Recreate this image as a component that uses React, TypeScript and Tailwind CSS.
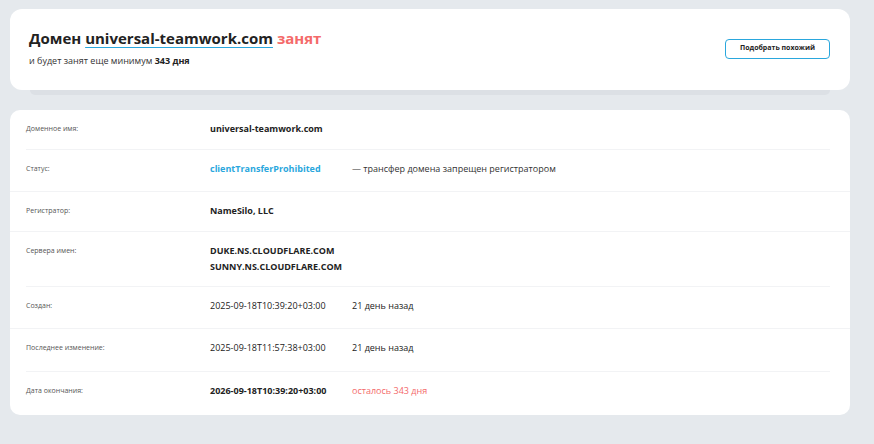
import React from "react";

const rows: {
  label: string;
  value: React.ReactNode;
  extra?: React.ReactNode;
  sep?: "inset" | "full" | "none";
  h: string;
}[] = [
  { label: "Доменное имя:", value: <span className="font-bold text-[#222]">universal-teamwork.com</span>, sep: "inset", h: "h-[39px]" },
  {
    label: "Статус:",
    value: <span className="font-bold text-[#2aa7dd]">clientTransferProhibited</span>,
    extra: <span className="text-[#333]">— трансфер домена запрещен регистратором</span>,
    sep: "full",
    h: "h-[41px]",
  },
  { label: "Регистратор:", value: <span className="font-bold text-[#222]">NameSilo, LLC</span>, sep: "full", h: "h-[39px]" },
  {
    label: "Сервера имен:",
    value: (
      <div className="flex flex-col font-bold text-[#222] leading-[16px]">
        <span>DUKE.NS.CLOUDFLARE.COM</span>
        <span>SUNNY.NS.CLOUDFLARE.COM</span>
      </div>
    ),
    sep: "inset",
    h: "h-[54px]",
  },
  {
    label: "Создан:",
    value: <span className="text-[#222]">2025-09-18T10:39:20+03:00</span>,
    extra: <span className="text-[#222]">21 день назад</span>,
    sep: "full",
    h: "h-[41px]",
  },
  {
    label: "Последнее изменение:",
    value: <span className="text-[#222]">2025-09-18T11:57:38+03:00</span>,
    extra: <span className="text-[#222]">21 день назад</span>,
    sep: "inset",
    h: "h-[42px]",
  },
  {
    label: "Дата окончания:",
    value: <span className="font-bold text-[#222]">2026-09-18T10:39:20+03:00</span>,
    extra: <span className="text-[#f46a6a]">осталось 343 дня</span>,
    sep: "none",
    h: "h-[43px]",
  },
];

export default function App() {
  return (
    <div
      className="w-[874px] h-[444px] bg-[#e5e9ed] pt-[9px] pl-[10px] pr-[24px] overflow-hidden"
      style={{ fontFamily: '"Open Sans", "Noto Sans", sans-serif' }}
    >
      <div className="flex flex-col">
        <div className="bg-white rounded-[12px] h-[81px] flex items-center justify-between pl-[19px] pr-[20px]">
          <div className="flex flex-col">
            <div className="text-[15px] font-bold text-[#222] leading-[22px] mt-[-6px]">
              Домен{" "}
              <span className="underline decoration-[#2aa7dd] decoration-1 underline-offset-[3px]">universal-teamwork.com</span>{" "}
              <span className="text-[#f46a6a]">занят</span>
            </div>
            <div className="text-[9px] text-[#333] mt-[6px] leading-[12px]">
              и будет занят еще минимум <span className="font-bold text-[#222]">343 дня</span>
            </div>
          </div>
          <button className="h-[20px] w-[105px] border border-[#2aa7dd] rounded-[4px] text-[7px] font-bold text-[#222] mt-[-2px]">
            Подобрать похожий
          </button>
        </div>
        <div className="mx-[20px] h-[5px] bg-[#dce0e5] rounded-b-[6px]" />
      </div>
      <div className="bg-white rounded-[10px] mt-[15px] flex flex-col">
        {rows.map((r, i) => (
          <div key={i} className="flex flex-col">
            <div className={"flex items-start pl-[16px] pt-[11px] text-[9px] leading-[16px] " + r.h}>
              <div className="w-[184px] text-[7px] text-[#555] leading-[16px] shrink-0">{r.label}</div>
              <div className="w-[142px] shrink-0">{r.value}</div>
              {r.extra && <div>{r.extra}</div>}
            </div>
            {r.sep === "inset" && <div className="h-px bg-[#f2f3f5] ml-[16px] mr-[20px]" />}
            {r.sep === "full" && <div className="h-px bg-[#f2f3f5]" />}
          </div>
        ))}
      </div>
    </div>
  );
}
